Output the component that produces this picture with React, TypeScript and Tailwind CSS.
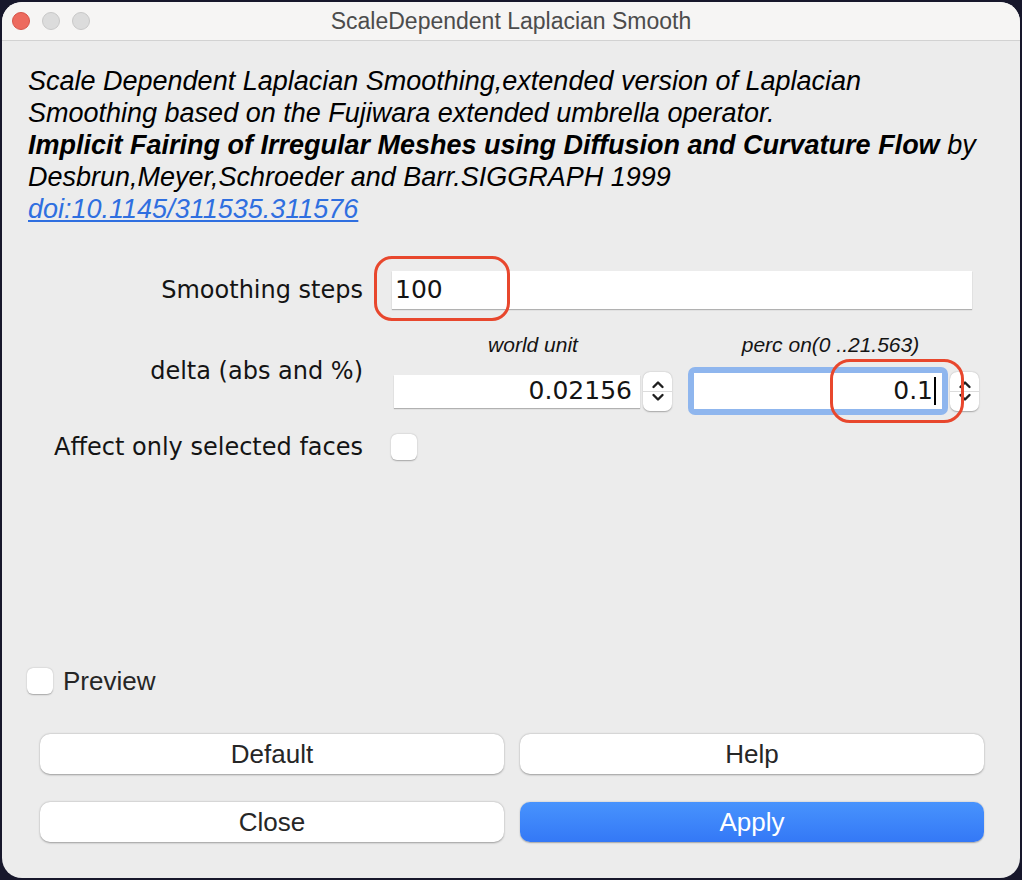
import React from "react";

const Chevrons = () => (
  <svg width="14" height="28" viewBox="0 0 14 28" fill="none" stroke="#1f1f1f" strokeWidth="2.4" strokeLinecap="round" strokeLinejoin="round">
    <path d="M2.5 10 L7 5.5 L11.5 10" />
    <path d="M2.5 18 L7 22.5 L11.5 18" />
  </svg>
);

const Spinner = () => (
  <div className="w-[29px] h-[39px] bg-white rounded-[7px] shadow-[0_0.5px_1.5px_rgba(0,0,0,0.3)] flex flex-col items-center justify-center relative">
    <div className="absolute left-0 right-0 top-1/2 h-px bg-[#dcdcdc]" />
    <Chevrons />
  </div>
);

const Button = ({ label, primary }: { label: string; primary?: boolean }) => (
  <button
    className={
      primary
        ? "flex-1 h-[40px] rounded-[10px] bg-gradient-to-b from-[#4893fd] to-[#3478f6] text-white text-[26px] leading-none shadow-[0_0.5px_1.5px_rgba(0,0,0,0.3)]"
        : "flex-1 h-[40px] rounded-[10px] bg-white text-[#262626] text-[26px] leading-none shadow-[0_0.5px_2px_rgba(0,0,0,0.35)]"
    }
  >
    {label}
  </button>
);

export default function App() {
  return (
    <div className="w-[1022px] h-[880px] bg-[#17172b] p-[2px] font-['Liberation_Sans',sans-serif]">
      <div className="w-[1018px] h-[876px] rounded-[20px] bg-[#ececec] overflow-hidden flex flex-col">
        {/* Title bar */}
        <div className="h-[39px] bg-[#f6f5f4] border-b border-[#d2d2d2] relative flex items-center justify-center shrink-0">
          <div className="absolute left-[10px] top-[10px] flex gap-[12px]">
            <div className="w-[18px] h-[18px] rounded-full bg-[#ed6a5e] border border-[#d65348]" />
            <div className="w-[18px] h-[18px] rounded-full bg-[#dcdcdc] border border-[#c8c8c8]" />
            <div className="w-[18px] h-[18px] rounded-full bg-[#dcdcdc] border border-[#c8c8c8]" />
          </div>
          <span className="text-[23px] text-[#4c4c4c]">ScaleDependent Laplacian Smooth</span>
        </div>

        {/* Description */}
        <div className="pl-[26px] pt-[24px] text-[27px] leading-[32px] italic text-black">
          <p>Scale Dependent Laplacian Smoothing,extended version of Laplacian</p>
          <p>Smoothing based on the Fujiwara extended umbrella operator.</p>
          <p>
            <span className="font-bold">Implicit Fairing of Irregular Meshes using Diffusion and Curvature Flow</span> by
          </p>
          <p>Desbrun,Meyer,Schroeder and Barr.SIGGRAPH 1999</p>
          <p>
            <a className="text-[#2f6fe0] underline">doi:10.1145/311535.311576</a>
          </p>
        </div>

        {/* Form */}
        <div className="mt-[46px] flex flex-col font-['DejaVu_Sans',sans-serif] text-[#141414]">
          {/* Smoothing steps */}
          <div className="flex items-center h-[38px]">
            <div className="w-[361px] text-right text-[24px]">Smoothing steps</div>
            <div className="ml-[29px] w-[580px] h-[38px] bg-white shadow-[0_1px_1px_rgba(0,0,0,0.25)] flex items-center pl-[3px] relative">
              <span className="text-[25px]">100</span>
              <div className="absolute left-[-18px] top-[-15px] w-[136px] h-[65px] rounded-[18px] border-[3px] border-[#e8472d]" />
            </div>
          </div>

          {/* delta */}
          <div className="flex items-center mt-[24px]">
            <div className="w-[361px] text-right text-[24px] -mt-[6px]">delta (abs and %)</div>
            <div className="ml-[31px] flex flex-col">
              <div className="flex text-[21px] italic font-['Liberation_Sans',sans-serif] h-[24px] items-center">
                <div className="w-[278px] text-center">world unit</div>
                <div className="w-[16px]" />
                <div className="w-[285px] text-center">perc on(0 ..21.563)</div>
              </div>
              <div className="flex items-center mt-[10px] h-[48px]">
                <div className="w-[246px] h-[33px] bg-white shadow-[0_1px_1px_rgba(0,0,0,0.25)] flex items-center justify-end pr-[8px]">
                  <span className="text-[25px]">0.02156</span>
                </div>
                <div className="ml-[3px]">
                  <Spinner />
                </div>
                <div className="ml-[16px] w-[260px] h-[48px] rounded-[7px] bg-[#8fb6ee] p-[6px] relative">
                  <div className="w-full h-full bg-white flex items-center justify-end pr-[6px]">
                    <span className="text-[25px]">0.1</span>
                    <span className="w-[2px] h-[28px] bg-black ml-[1px]" />
                  </div>
                  <div className="absolute left-[142px] top-[-8px] w-[134px] h-[64px] rounded-[20px] border-[3px] border-[#e8472d] z-10" />
                </div>
                <div className="ml-[2px]">
                  <div className="w-[23px]">
                    <Spinner />
                  </div>
                </div>
              </div>
            </div>
          </div>

          {/* Affect only selected faces */}
          <div className="flex items-center mt-[19px] h-[26px]">
            <div className="w-[361px] text-right text-[24px]">Affect only selected faces</div>
            <div className="ml-[28px] w-[26px] h-[26px] bg-white rounded-[6px] shadow-[0_0.5px_1.5px_rgba(0,0,0,0.3)]" />
          </div>
        </div>

        {/* Preview */}
        <div className="mt-auto flex items-center pl-[25px] gap-[10px]">
          <div className="w-[26px] h-[26px] bg-white rounded-[6px] shadow-[0_0.5px_1.5px_rgba(0,0,0,0.3)]" />
          <span className="text-[26px] text-[#262626] leading-none">Preview</span>
        </div>

        {/* Buttons */}
        <div className="mt-[40px] mb-[36px] pl-[38px] pr-[36px] flex flex-col gap-[28px]">
          <div className="flex gap-[16px]">
            <Button label="Default" />
            <Button label="Help" />
          </div>
          <div className="flex gap-[16px]">
            <Button label="Close" />
            <Button label="Apply" primary />
          </div>
        </div>
      </div>
    </div>
  );
}
